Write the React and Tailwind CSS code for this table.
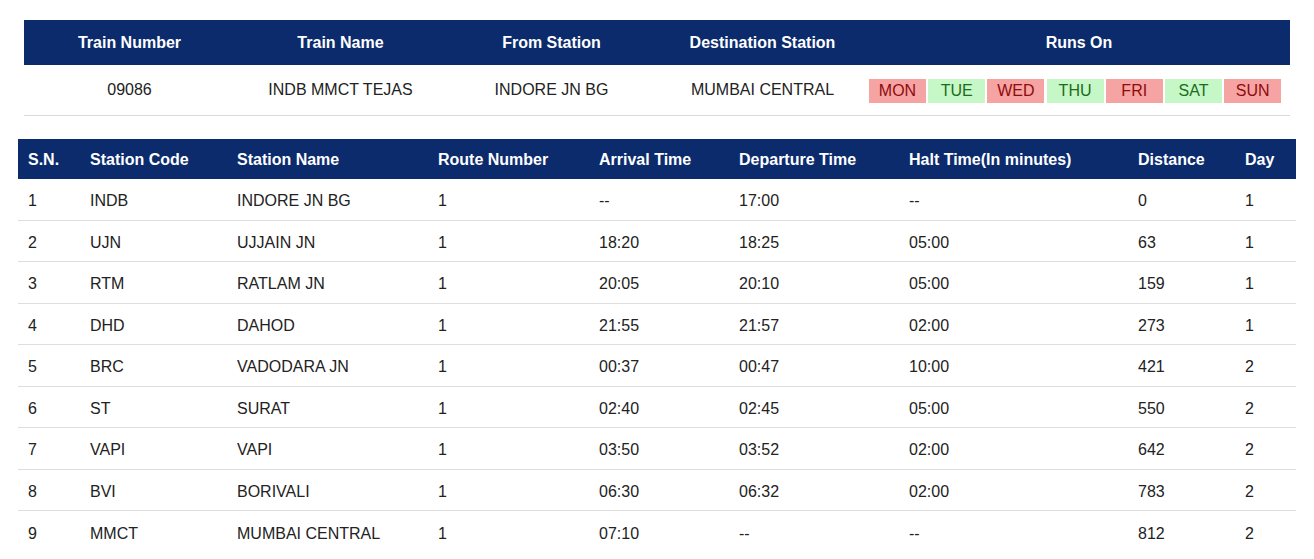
import React from 'react';

const days = [
  { d: 'MON', on: false },
  { d: 'TUE', on: true },
  { d: 'WED', on: false },
  { d: 'THU', on: true },
  { d: 'FRI', on: false },
  { d: 'SAT', on: true },
  { d: 'SUN', on: false },
];

const stops = [
  ['1', 'INDB', 'INDORE JN BG', '1', '--', '17:00', '--', '0', '1'],
  ['2', 'UJN', 'UJJAIN JN', '1', '18:20', '18:25', '05:00', '63', '1'],
  ['3', 'RTM', 'RATLAM JN', '1', '20:05', '20:10', '05:00', '159', '1'],
  ['4', 'DHD', 'DAHOD', '1', '21:55', '21:57', '02:00', '273', '1'],
  ['5', 'BRC', 'VADODARA JN', '1', '00:37', '00:47', '10:00', '421', '2'],
  ['6', 'ST', 'SURAT', '1', '02:40', '02:45', '05:00', '550', '2'],
  ['7', 'VAPI', 'VAPI', '1', '03:50', '03:52', '02:00', '642', '2'],
  ['8', 'BVI', 'BORIVALI', '1', '06:30', '06:32', '02:00', '783', '2'],
  ['9', 'MMCT', 'MUMBAI CENTRAL', '1', '07:10', '--', '--', '812', '2'],
];

const heads = [
  'S.N.',
  'Station Code',
  'Station Name',
  'Route Number',
  'Arrival Time',
  'Departure Time',
  'Halt Time(In minutes)',
  'Distance',
  'Day',
];

const cols = 'grid grid-cols-[62px_147px_201px_161px_140px_170px_229px_107px_60px]';

export default function App() {
  return (
    <div className="min-h-screen bg-white px-[18px] pt-5 text-base text-[#222] font-['Liberation_Sans',Arial,sans-serif]">
      {/* train summary */}
      <div className="mx-[6px]">
        <div className="grid h-[45px] grid-cols-6 items-center bg-[#0b2b6d] pt-[1px] font-bold text-white">
          <div className="text-center">Train Number</div>
          <div className="text-center">Train Name</div>
          <div className="text-center">From Station</div>
          <div className="text-center">Destination Station</div>
          <div className="col-span-2 text-center">Runs On</div>
        </div>
        <div className="grid h-[51px] grid-cols-6 items-center border-b border-[#d9d9d9]">
          <div className="text-center">09086</div>
          <div className="text-center">INDB MMCT TEJAS</div>
          <div className="text-center">INDORE JN BG</div>
          <div className="text-center">MUMBAI CENTRAL</div>
          <div className="col-span-2 flex gap-[2.2px] pl-[1px] pt-[2px]">
            {days.map((x) => (
              <span
                key={x.d}
                className={
                  x.on
                    ? 'flex h-6 w-[57px] items-center justify-center bg-[#c6f7c6] text-[#1d6b1d]'
                    : 'flex h-6 w-[57px] items-center justify-center bg-[#f6a3a3] text-[#8e0b0b]'
                }
              >
                {x.d}
              </span>
            ))}
          </div>
        </div>
      </div>

      {/* schedule */}
      <div className="mt-[23px]">
        <div className={`${cols} h-[40px] items-center bg-[#0b2b6d] pt-[1px] font-bold text-white`}>
          {heads.map((h) => (
            <div key={h} className="px-[10px]">{h}</div>
          ))}
        </div>
        {stops.map((r, i) => (
          <div
            key={r[0]}
            className={`${cols} h-[41.5px] items-center pt-[4px] ${i < stops.length - 1 ? 'border-b border-[#dedede]' : ''}`}
          >
            {r.map((c, j) => (
              <div key={j} className="px-[10px]">{c}</div>
            ))}
          </div>
        ))}
      </div>
    </div>
  );
}
